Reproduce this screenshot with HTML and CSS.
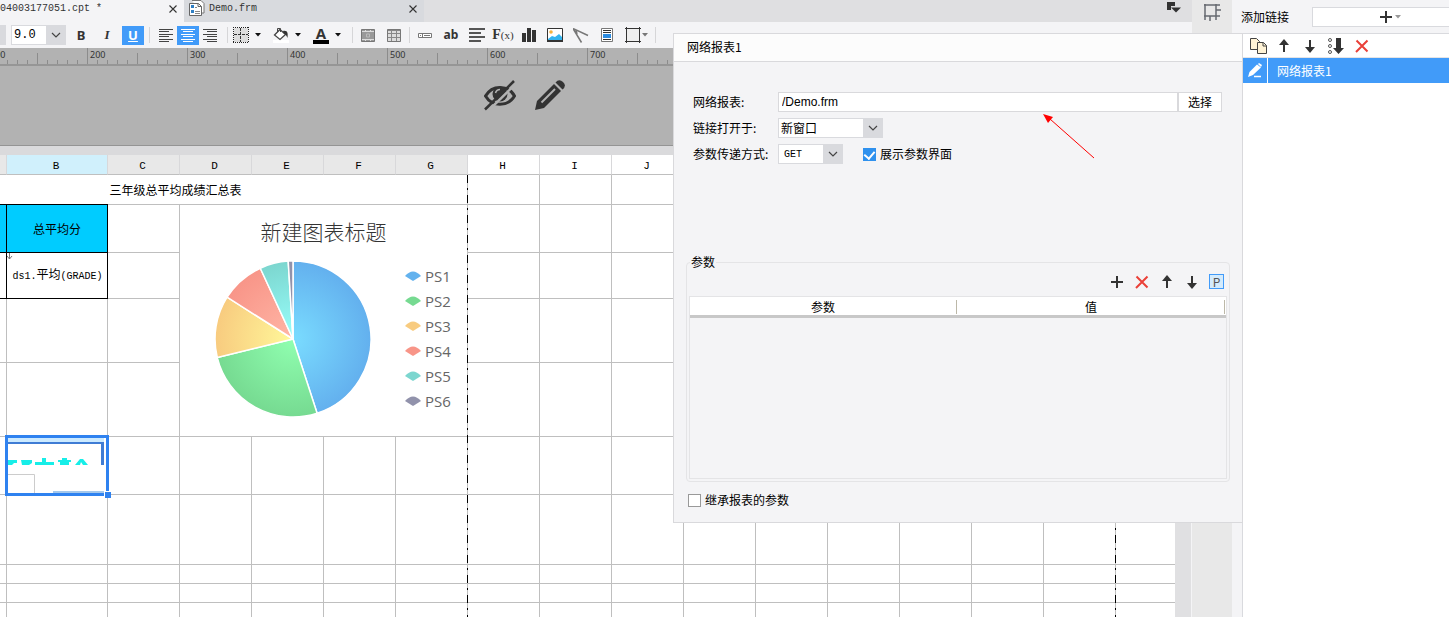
FILE: index.html
```html
<!DOCTYPE html>
<html lang="zh-CN">
<head>
<meta charset="utf-8">
<title>网络报表</title>
<link rel="stylesheet" href="styles.css">
</head>
<body>
<svg class="defs" width="0" height="0" aria-hidden="true">
  <symbol id="chev" viewBox="0 0 10 10"><path d="M1 3l4 4 4-4" fill="none" stroke="#444" stroke-width="1.2"/></symbol>
  <symbol id="caret" viewBox="0 0 6 4"><path d="M0 0h6L3 3.5z" fill="currentColor"/></symbol>
  <symbol id="close" viewBox="0 0 8 8"><path d="M.5.5l7 7M7.500.5l-7 7" fill="none" stroke="#333" stroke-width="1.1"/></symbol>
  <symbol id="plus" viewBox="0 0 14 14"><path d="M7 1v12M1 7h12" stroke="#333" stroke-width="2"/></symbol>
  <symbol id="cross" viewBox="0 0 14 14"><path d="M1.500 1.500l11 11M12.500 1.500L1 13" stroke="#ea4038" stroke-width="2"/></symbol>
  <symbol id="up" viewBox="0 0 14 14"><path d="M7 2v11" stroke="#333" stroke-width="2"/><path d="M7 0l5 6H2z" fill="#333"/></symbol>
  <symbol id="down" viewBox="0 0 14 14"><path d="M7 1v11" stroke="#333" stroke-width="2"/><path d="M7 14l5-6H2z" fill="#333"/></symbol>
</svg>
<div class="app">
  <main class="designer">
    <nav class="tabs">
      <div class="tab active"><span class="tab-name">04003177051.cpt *</span><button class="tab-close" aria-label="关闭"><svg width="8" height="8"><use href="#close"/></svg></button></div>
      <div class="tab"><svg class="tab-icon" width="16" height="17" viewBox="0 0 16 17"><path d="M3 .5h9l3 3V13h-2" fill="#fff" stroke="#777"/><path d="M.5 3.500h9l3 3V15.500H.5z" fill="#fff" stroke="#666"/><path d="M9 3.500v3h3.500" fill="none" stroke="#666"/><path d="M2 5h3v3H2zM2 10h3v3H2z" fill="#2f7fc4"/><path d="M6 7.500h2M6 11.500h5M6 13.500h5" stroke="#888"/></svg><span class="tab-name">Demo.frm</span><button class="tab-close" aria-label="关闭"><svg width="8" height="8"><use href="#close"/></svg></button></div>
      <button class="tab-list" aria-label="标签列表"><svg width="14" height="11" viewBox="0 0 14 11"><path d="M0 0h8v4H4v4H0z" fill="#333"/><path d="M4 5.500h10L9 10.500z" fill="#333"/></svg></button>
    </nav>

    <div class="toolbar">
      <span class="stub"></span>
      <label class="combo size-combo"><select class="mono" aria-label="字号"><option>9.0</option></select><span class="arrow"><svg width="10" height="10"><use href="#chev"/></svg></span></label>
      <div class="group style-group">
        <button class="tool letter bold">B</button>
        <button class="tool letter italic">I</button>
        <button class="tool letter under on">U</button>
      </div>
      <i class="sep"></i>
      <div class="group align-group">
        <button class="tool" aria-label="左对齐"><svg width="14" height="13"><path d="M0 .5h14M0 2.500h10M0 5.500h14M0 7.500h10M0 10.500h14M0 12.500h10" stroke="#444"/></svg></button>
        <button class="tool on" aria-label="居中"><svg width="14" height="13"><path d="M0 .5h14M2 2.500h10M0 5.500h14M2 7.500h10M0 10.500h14M2 12.500h10" stroke="#fff"/></svg></button>
        <button class="tool" aria-label="右对齐"><svg width="14" height="13"><path d="M0 .5h14M4 2.500h10M0 5.500h14M4 7.500h10M0 10.500h14M4 12.500h10" stroke="#444"/></svg></button>
      </div>
      <i class="sep"></i>
      <div class="group">
        <button class="split" aria-label="边框"><svg width="16" height="16"><path fill="#ddd" d="M1 1h14v14H1z"/><path d="M.5 0v16M15.500 0v16M0 .5h16M0 15.500h16" stroke="#222" stroke-dasharray="1 1"/><path d="M7.500 1v14M1 7.500h14" stroke="#333" stroke-dasharray="3 1"/></svg><svg width="6" height="4"><use href="#caret"/></svg></button>
        <button class="split" aria-label="填充"><svg width="16" height="16"><path fill="#fff" d="M0 13h16v3H0z"/><path d="M7 2.500l5.500 5L7 12.500 1.500 8z" fill="#fff" stroke="#444" stroke-width="1.300"/><path d="M4.500 5V1.500h3V5" fill="none" stroke="#444"/><path d="M10 4c5-1 5 3 4.500 7-1-2-1.500-4-4-5z" fill="#333"/></svg><svg width="6" height="4"><use href="#caret"/></svg></button>
        <button class="split" aria-label="字体颜色"><span class="font-color">A</span><svg width="6" height="4"><use href="#caret"/></svg></button>
      </div>
      <i class="sep"></i>
      <div class="group">
        <button class="tool wide" aria-label="合并"><svg width="14" height="13"><path d="M.5.5h13v12H.5z" fill="#999" stroke="#777"/><path d="M1 2.500h12M1 10.500h12" stroke="#ddd"/><path d="M4.500 1v2M9.500 1v2M4.500 10v2M9.500 10v2" stroke="#ddd"/><path d="M5.500 5h3v3h-3z" fill="none" stroke="#bbb"/></svg></button>
        <button class="tool wide" aria-label="拆分"><svg width="14" height="13"><path d="M.5.5h13v12H.5z" fill="#888" stroke="#777"/><path d="M1 2h3v2H1zM5 2h4v2H5zM10 2h3v2h-3zM1 5h3v3H1zM5 5h4v3H5zM10 5h3v3h-3zM1 9h3v3H1zM5 9h4v3H5zM10 9h3v3h-3z" fill="#ddd"/></svg></button>
      </div>
      <i class="sep"></i>
      <div class="group">
        <button class="tool wide" aria-label="控件"><svg width="14" height="5"><path d="M.5.5h13v4H.5zM4.500.5v4" fill="#fff" stroke="#777"/><path d="M6 2.500h6" stroke="#777"/><path d="M2 2.500h1" stroke="#777"/></svg></button>
        <button class="tool wide letter ab">ab</button>
        <button class="tool wide" aria-label="富文本"><svg width="16" height="14"><path d="M0 1h16M0 5h12M0 9h16M0 13h12" stroke="#555" stroke-width="2"/></svg></button>
        <button class="tool wide letter fx">F<small>(x)</small></button>
        <button class="tool wide" aria-label="图表"><svg width="14" height="14"><path d="M0 5h4v9H0zM5 0h4v14H5zM10 2h4v12h-4z" fill="#333"/></svg></button>
        <button class="tool wide" aria-label="图片"><svg width="16" height="14"><path d="M.5.500h15v13H.5z" fill="#fff" stroke="#333"/><circle cx="4" cy="4" r="1.800" fill="#f7b23b"/><path d="M1 11l4-3 3 1 4-3 3 3v3H1z" fill="#35b4ef"/><path d="M0 12h16v2H0z" fill="#333"/></svg></button>
        <button class="tool wide" aria-label="斜线"><svg width="16" height="15"><path d="M0 .5l15 7M0 .5l8.500 14M3 2l1 4" fill="none" stroke="#777" stroke-width="1.500"/></svg></button>
        <button class="tool wide" aria-label="子报表"><svg width="12" height="14"><path d="M.5.500h11v13H.5z" fill="#fff" stroke="#777"/><path d="M2 2.500h8M2 4.500h8M2 11.500h8" stroke="#333"/><path d="M2 6h8v4H2z" fill="#2b8be0"/></svg></button>
        <button class="tool wide shape" aria-label="形状"><svg width="16" height="16"><path d="M2 2h12v12H2z" fill="#eee"/><path d="M0 1.500h16M0 14.500h16M1.500 0v16M14.500 0v16" stroke="#333"/></svg><svg width="6" height="4"><use href="#caret"/></svg></button>
      </div>
      <i class="sep shape-sep"></i>
    </div>

    <div class="ruler"><div class="ruler-track"><span>100</span><span>200</span><span>300</span><span>400</span><span>500</span><span>600</span><span>700</span></div></div>

    <div class="param-pane">
      <button aria-label="隐藏"><svg width="32" height="31" viewBox="0 0 32 31"><path d="M1.500 16C8 4.500 24 4.500 30.500 16 24 27 8 27 1.500 16z" fill="none" stroke="#333" stroke-width="3"/><circle cx="16" cy="14" r="7.500" fill="#333"/><path d="M11.500 13q1-3.500 4.500-3.500" stroke="#b2b2b2" stroke-width="1.500" fill="none"/><path d="M3 32L32 3.500" stroke="#b2b2b2" stroke-width="2.500"/><path d="M1 29.500L30 1" stroke="#333" stroke-width="2.500"/></svg></button>
      <button aria-label="编辑"><svg width="30" height="30" viewBox="0 0 30 30"><path d="M0 30L2 21 19 4l7 7L9 28z" fill="#333"/><path d="M20.500 2.500Q24-1.500 28 2t-.5 7.500z" fill="#333"/><path d="M6.500 22.500L20 9" stroke="#b2b2b2" stroke-width="2"/></svg></button>
    </div>

    <div class="sheet-area">
      <div class="sheet">
        <table class="grid">
          <colgroup><col class="col-a"><col class="col-b"><col span="15" class="col-n"></colgroup>
          <thead>
            <tr><th class="page"></th><th class="current">B</th><th class="page">C</th><th class="page">D</th><th class="page">E</th><th class="page">F</th><th class="page">G</th><th>H</th><th>I</th><th>J</th><th></th><th></th><th></th><th></th><th></th><th></th><th></th></tr>
          </thead>
          <tbody>
            <tr class="h30"><td colspan="7" class="report-title">三年级总平均成绩汇总表</td><td></td><td></td><td></td><td></td><td></td><td></td><td></td><td></td><td></td><td></td></tr>
            <tr class="h48"><td class="ink head top"></td><td class="ink head top">总平均分</td><td></td>
              <td colspan="4" rowspan="4" class="chart-cell">
                <div class="chart">
                  <h2>新建图表标题</h2>
                  <svg class="pie" width="158" height="158" viewBox="-79 -79 158 158">
                    <defs>
                      <radialGradient id="g1" gradientUnits="userSpaceOnUse" cx="0" cy="0" r="78"><stop offset="0" stop-color="#7adcff"/><stop offset="1" stop-color="#63b0ee"/></radialGradient>
                      <radialGradient id="g2" gradientUnits="userSpaceOnUse" cx="0" cy="0" r="78"><stop offset="0" stop-color="#90ffb0"/><stop offset="1" stop-color="#76da91"/></radialGradient>
                      <radialGradient id="g3" gradientUnits="userSpaceOnUse" cx="0" cy="0" r="78"><stop offset="0" stop-color="#fff89a"/><stop offset="1" stop-color="#f8cb7f"/></radialGradient>
                      <radialGradient id="g4" gradientUnits="userSpaceOnUse" cx="0" cy="0" r="78"><stop offset="0" stop-color="#ffb6a6"/><stop offset="1" stop-color="#f89588"/></radialGradient>
                      <radialGradient id="g5" gradientUnits="userSpaceOnUse" cx="0" cy="0" r="78"><stop offset="0" stop-color="#98fffc"/><stop offset="1" stop-color="#7cd6cf"/></radialGradient>
                    </defs>
                    <g stroke="#fff" stroke-width="1.500" stroke-linejoin="round">
                      <path fill="url(#g1)" d="M0 0V-78A78 78 0 0 1 24.100 74.200z"/>
                      <path fill="url(#g2)" d="M0 0L24.100 74.200A78 78 0 0 1-75.700 18.600z"/>
                      <path fill="url(#g3)" d="M0 0L-75.700 18.600A78 78 0 0 1-65.900-41.800z"/>
                      <path fill="url(#g4)" d="M0 0L-65.900-41.800A78 78 0 0 1-32.700-70.800z"/>
                      <path fill="url(#g5)" d="M0 0L-32.700-70.800A78 78 0 0 1-4.800-77.900z"/>
                      <path fill="#9192ab" d="M0 0L-4.800-77.900A78 78 0 0 1 0-78z"/>
                    </g>
                  </svg>
                  <ul class="legend">
                    <li class="c1"><svg width="16" height="10"><path d="M0 5Q8-4 16 5L8 10z"/></svg>PS1</li>
                    <li class="c2"><svg width="16" height="10"><path d="M0 5Q8-4 16 5L8 10z"/></svg>PS2</li>
                    <li class="c3"><svg width="16" height="10"><path d="M0 5Q8-4 16 5L8 10z"/></svg>PS3</li>
                    <li class="c4"><svg width="16" height="10"><path d="M0 5Q8-4 16 5L8 10z"/></svg>PS4</li>
                    <li class="c5"><svg width="16" height="10"><path d="M0 5Q8-4 16 5L8 10z"/></svg>PS5</li>
                    <li class="c6"><svg width="16" height="10"><path d="M0 5Q8-4 16 5L8 10z"/></svg>PS6</li>
                  </ul>
                </div>
              </td>
              <td></td><td></td><td></td><td></td><td></td><td></td><td></td><td></td><td></td><td></td></tr>
            <tr class="h46"><td class="ink"></td><td class="ink field"><svg class="expand" width="6" height="7"><path d="M2.500 0v6M0 3l2.500 3L5 3" fill="none" stroke="#777"/></svg><span class="mono">ds1.</span>平均<span class="mono">(GRADE)</span></td><td></td><td></td><td></td><td></td><td></td><td></td><td></td><td></td><td></td><td></td><td></td></tr>
            <tr class="h64"><td></td><td></td><td></td><td></td><td></td><td></td><td></td><td></td><td></td><td></td><td></td><td></td><td></td></tr>
            <tr class="h74"><td></td><td></td><td></td><td></td><td></td><td></td><td></td><td></td><td></td><td></td><td></td><td></td><td></td></tr>
            <tr class="h58"><td></td><td class="picked"><div class="selection"><svg width="98" height="55" viewBox="0 0 98 55"><path fill="#cceaff" d="M0 0h96v4H0z"/><path fill="#3f7cd4" d="M0 4h96v23h-3V6H0z"/><path fill="#17eee8" d="M0 22h9v3H6l-2 2H0zM13 22h11v3l-3 2h-7zM27 24h7v-4h4v4h8v3H27zM50 22h4v-2h5v2h4v2h-2v3h-9v-3h-2zM67 27l5-6h3l5 6h-5l-2-3-1 3z"/><path d="M0 36.500h26.500V55" fill="none" stroke="#ccc"/><path fill="#a4c8ec" d="M45 53h53v2H45z"/></svg></div></td><td></td><td></td><td></td><td></td><td></td><td></td><td></td><td></td><td></td><td></td><td></td><td></td><td></td><td></td><td></td></tr>
            <tr class="h70"><td></td><td></td><td></td><td></td><td></td><td></td><td></td><td></td><td></td><td></td><td></td><td></td><td></td><td></td><td></td><td></td><td></td></tr>
            <tr class="h19"><td></td><td></td><td></td><td></td><td></td><td></td><td></td><td></td><td></td><td></td><td></td><td></td><td></td><td></td><td></td><td></td><td></td></tr>
            <tr class="h19"><td></td><td></td><td></td><td></td><td></td><td></td><td></td><td></td><td></td><td></td><td></td><td></td><td></td><td></td><td></td><td></td><td></td></tr>
            <tr class="h19"><td></td><td></td><td></td><td></td><td></td><td></td><td></td><td></td><td></td><td></td><td></td><td></td><td></td><td></td><td></td><td></td><td></td></tr>
          </tbody>
        </table>
        <i class="page-edge first"></i>
        <i class="page-edge second"></i>
      </div>
      <div class="scrollbar"></div>
    </div>
  </main>

  <div class="rail"><button aria-label="单元格元素"><svg width="17" height="17"><path d="M1 0v16M0 1h16M0 12h16M12 0v16M12 6h5M6 12v5" fill="none" stroke="#666a70" stroke-width="1.500"/></svg></button></div>

  <aside class="links">
    <div class="links-top"><span>添加链接</span><button class="add" aria-label="添加"><svg width="14" height="14"><use href="#plus"/></svg><svg class="dim" width="6" height="4"><use href="#caret"/></svg></button></div>
    <div class="links-body">
      <div class="links-tools">
        <button aria-label="复制"><svg width="17" height="16"><path d="M.5.500h6l3 3v8h-9z" fill="#fff3d6" stroke="#444"/><path d="M7.500 4.500h6l3 3v8h-9z" fill="#fff3d6" stroke="#444"/><path d="M13 4.500v3.500h3.500" fill="none" stroke="#444"/></svg></button>
        <button aria-label="上移"><svg width="14" height="14"><use href="#up"/></svg></button>
        <button aria-label="下移"><svg width="14" height="14"><use href="#down"/></svg></button>
        <button aria-label="排序"><svg width="16" height="16"><g fill="none" stroke="#555"><circle cx="2" cy="2" r="1.500"/><circle cx="2" cy="8" r="1.500"/><circle cx="2" cy="14" r="1.500"/></g><path d="M8 0h5v10h3l-5.500 6L5 10h3z" fill="#333"/></svg></button>
        <button aria-label="删除"><svg width="14" height="14"><use href="#cross"/></svg></button>
      </div>
      <div class="link-item"><span class="edit"><svg width="15" height="15"><path d="M0 14l1.500-5L9 1.500l4 3L5 12z" fill="#fff"/><path d="M10 1l1-1 3 2-1 2z" fill="#fff"/><path d="M6 13.500h7" stroke="#fff" stroke-width="1.500"/></svg></span><span>网络报表1</span></div>
    </div>
  </aside>

  <section class="dialog">
    <header>网络报表1</header>
    <div class="form">
      <div class="row"><label class="name" for="path">网络报表:</label><input id="path" class="path" type="text" value="/Demo.frm"><button class="choose">选择</button></div>
      <div class="row"><label class="name" for="target">链接打开于:</label><span class="combo target"><select id="target"><option>新窗口</option></select><span class="arrow"><svg width="10" height="10"><use href="#chev"/></svg></span></span></div>
      <div class="row"><label class="name" for="method">参数传递方式:</label><span class="combo method"><select id="method" class="mono"><option>GET</option></select><span class="arrow"><svg width="10" height="10"><use href="#chev"/></svg></span></span>
        <label class="check show"><input type="checkbox" checked><span>展示参数界面</span></label></div>
    </div>
    <fieldset class="params">
      <legend>参数</legend>
      <div class="param-tools">
        <button aria-label="添加"><svg width="14" height="14"><use href="#plus"/></svg></button>
        <button aria-label="删除"><svg width="14" height="14"><use href="#cross"/></svg></button>
        <button aria-label="上移"><svg width="14" height="14"><use href="#up"/></svg></button>
        <button aria-label="下移"><svg width="14" height="14"><use href="#down"/></svg></button>
        <button class="p">P</button>
      </div>
      <div class="param-box"><table><thead><tr><th><span>参数</span></th><th><span>值</span></th></tr></thead></table></div>
    </fieldset>
    <label class="check inherit"><input type="checkbox"><span>继承报表的参数</span></label>
    <svg class="pointer" width="54" height="48"><path d="M8 6l44 39" stroke="#f00"/><path d="M1 1l10 3-5 6z" fill="#f00"/></svg>
  </section>
</div>
</body>
</html>
```
FILE: styles.css
```css
* { box-sizing: border-box; }
body {
  margin: 0;
  overflow: hidden;
  font: 12px/16px "Liberation Sans", "Noto Sans CJK SC", sans-serif;
  color: #000;
  background: #f4f4f6;
}
button {
  margin: 0;
  padding: 0;
  border: 0;
  background: none;
  font: inherit;
  color: inherit;
}
svg { display: block; flex: none; }
.defs { position: absolute; }
.mono { font-family: "Liberation Mono", monospace; font-size: 10px; }

.app { position: relative; display: flex; height: 100vh; }
.designer { flex: 1; min-width: 0; display: flex; flex-direction: column; }

/* document tabs */
.tabs { display: flex; height: 22px; background: #dfdfe1; overflow: hidden; }
.tab {
  display: flex;
  align-items: center;
  width: 240px;
  height: 22px;
  padding: 0 7px 5px 0;
  background: #d8dade;
}
.tab.active { width: 184px; background: #f4f4f6; }
.tab-icon { margin: 0 4px 0 5px; }
.tab-name { flex: 1; font: 10px/14px "Liberation Mono", monospace; color: #333; }
.tab-list { margin: 0 11px 8px auto; }

/* toolbar */
.toolbar { display: flex; align-items: center; height: 26px; flex: none; overflow: hidden; }
.stub { width: 6px; height: 20px; margin-right: 5px; background: #d9dade; }
.combo { display: flex; height: 20px; border: 1px solid #d9dade; background: #fff; }
.combo select {
  flex: 1;
  min-width: 0;
  padding: 0 2px;
  border: 0;
  appearance: none;
  background: #fff;
  font: 12px/16px "Noto Sans CJK SC", sans-serif;
  color: #000;
}
.combo select.mono { font: 10px/16px "Liberation Mono", monospace; padding: 1px 0 0 5px; }
.combo .arrow { display: grid; place-items: center; width: 19px; background: #d9dade; }
.size-combo { width: 55px; margin-right: 4px; }
.toolbar .combo select.mono { font-size: 12px; padding: 0 0 0 2px; }
.group { display: flex; align-items: center; }
.style-group { gap: 4px; padding-right: 3px; }
.align-group { padding: 0 4px 0 3px; }
.sep { width: 1px; height: 16px; margin: 0 2px; background: #d6d6d8; }
.tool { display: flex; align-items: center; justify-content: center; width: 22px; height: 19px; color: #333; }
.tool.wide { width: 26px; }
.tool.on { background: #419bf9; color: #fff; }
.letter { font-family: "Noto Sans", sans-serif; font-size: 13px; font-weight: 700; }
.italic { font-family: "Liberation Serif", serif; font-style: italic; }
.under { text-decoration: underline; }
.ab { font-size: 12px; }
.fx { font-family: "Liberation Serif", serif; font-size: 14px; }
.fx small { font-size: 11px; font-weight: 400; }
.split { display: flex; align-items: center; gap: 6px; width: 40px; padding-left: 3px; color: #111; }
.font-color {
  width: 16px;
  border-bottom: 4px solid #000;
  font: 700 15px/13px "Noto Sans", sans-serif;
  color: #333;
}
.shape { gap: 1px; color: #777; }
.tool.shape { width: 32px; }
.shape-sep { margin-left: 3px; }

/* ruler */
.ruler { flex: none; height: 18px; background: #b2b2b2; border-bottom: 2px solid #969696; overflow: hidden; }
.ruler-track { display: flex; margin-left: -13px; }
.ruler-track span {
  flex: 0 0 100px;
  height: 16px;
  padding-left: 3px;
  font: 9px/13px "Noto Sans", sans-serif;
  color: #333;
  background:
    linear-gradient(#8c8c8c, #8c8c8c) 0 0 / 1px 16px no-repeat,
    linear-gradient(#8c8c8c, #8c8c8c) 50px 5px / 1px 11px no-repeat,
    repeating-linear-gradient(90deg, #8c8c8c 0 1px, transparent 1px 10px) 0 12px / 100px 4px no-repeat;
}

.param-pane {
  display: flex;
  flex: none;
  align-items: flex-start;
  gap: 19px;
  height: 80px;
  padding: 14px 0 0 484px;
  background: #b2b2b2;
  border-bottom: 1px solid #949494;
}

/* sheet */
.sheet-area { flex: 1; min-height: 0; display: flex; border-top: 9px solid #dadadc; background: #fff; }
.sheet { position: relative; flex: 1; min-width: 0; overflow: hidden; }
.scrollbar { width: 17px; background: #e0e0e2; border-right: 1px solid #f4f4f6; }
.grid { width: 1188px; table-layout: fixed; border-collapse: separate; border-spacing: 0; }
.col-a { width: 7px; }
.col-b { width: 101px; }
.col-n { width: 72px; }
.grid th {
  height: 20px;
  padding: 2px 2px 0 0;
  border-right: 1px solid #d8d8da;
  border-bottom: 1px solid #bfbfbf;
  font: 11px/16px "Liberation Mono", monospace;
}
.grid th.page { background: #e8e8e8; }
.grid th.current { background: #d0f0fc; }
.grid td {
  padding: 0;
  border-right: 1px solid #bfbfbf;
  border-bottom: 1px solid #bfbfbf;
  text-align: center;
  font-family: "Noto Sans CJK SC", sans-serif;
}
.grid td.report-title { padding-right: 116px; }
.grid td.ink { border-color: #000; }
.grid td.head { background: #00ccff; }
.grid td.top { box-shadow: 0 -1px #000; }
.grid td.field { position: relative; padding-left: 1px; white-space: nowrap; }
.expand { position: absolute; left: 0; top: 0; }
.h30 { height: 30px; }
.h48 { height: 48px; }
.h46 { height: 46px; }
.h64 { height: 64px; }
.h74 { height: 74px; }
.h58 { height: 58px; }
.h70 { height: 70px; }
.h19 { height: 19px; }
.picked { position: relative; }
.selection { position: absolute; inset: -2px; border: 3px solid #2f82f0; background: #fff; }
.selection::after {
  content: "";
  position: absolute;
  right: -5px;
  bottom: -5px;
  width: 6px;
  height: 6px;
  background: #2f82f0;
  border-left: 1px solid #fff;
  border-top: 1px solid #fff;
}
.page-edge {
  position: absolute;
  top: 20px;
  bottom: 0;
  width: 1px;
  background: repeating-linear-gradient(#000 0 8px, #bfbfbf 8px 13px, #000 13px 15px, #bfbfbf 15px 20px);
}
.page-edge.first { left: 467px; }
.page-edge.second { left: 1115px; }

/* chart */
.chart {
  display: grid;
  grid-template: 54px 158px 18px / 158px 1fr;
  column-gap: 33px;
  padding-left: 34px;
  text-align: left;
}
.chart h2 {
  grid-column: 1 / 3;
  margin: 10px 34px 0 0;
  font: 300 21px/30px "Noto Sans CJK SC", sans-serif;
  color: #333;
  text-align: center;
}
.legend {
  margin: 4px 0 0;
  padding: 0;
  list-style: none;
  font: 15px/25px "Open Sans", sans-serif;
  color: #666;
}
.legend li { display: flex; align-items: center; gap: 4px; }
.c1 svg { fill: #63b2ee; }
.c2 svg { fill: #76da91; }
.c3 svg { fill: #f8cb7f; }
.c4 svg { fill: #f89588; }
.c5 svg { fill: #7cd6cf; }
.c6 svg { fill: #9192ab; }

/* side rail and link list */
.rail { width: 40px; padding: 4px 0 0 12px; background: #e8e8e8; }
.links { width: 217px; display: flex; flex-direction: column; }
.links-top { display: flex; align-items: center; height: 33px; padding-left: 9px; font-family: "Noto Sans CJK SC", sans-serif; }
.add {
  display: flex;
  flex: 1;
  align-items: center;
  justify-content: center;
  gap: 2px;
  height: 20px;
  margin: 0 -18px 0 23px;
  background: #fff;
  border: 1px solid #d9dade;
}
.dim { color: #999; }
.links-body { flex: 1; margin-left: 10px; border: 1px solid #d9dade; border-width: 1px 0 0 1px; background: #fff; }
.links-tools { display: flex; height: 24px; padding-left: 2px; border-bottom: 1px solid #e4e4e6; }
.links-tools button { display: grid; place-items: center; width: 26px; }
.link-item { display: flex; height: 25px; line-height: 25px; background: #419bf9; color: #fff; font-family: "Noto Sans CJK SC", sans-serif; }
.edit { display: grid; place-items: center; width: 25px; margin-right: 9px; border-right: 1px solid #fff; }

/* dialog */
.dialog {
  position: absolute;
  top: 33px;
  right: 206px;
  width: 570px;
  padding-bottom: 14px;
  border: 1px solid #d9d9dc;
  background: #f4f4f6;
  font-family: "Noto Sans CJK SC", sans-serif;
}
.dialog header { height: 28px; padding-left: 13px; line-height: 26px; background: #fcfcfc; border-bottom: 1px solid #d9d9dc; }
.form { display: flex; flex-direction: column; gap: 6px; padding: 30px 20px 0 19px; }
.row { display: flex; align-items: center; height: 20px; }
.name { width: 85px; }
.path {
  flex: 1;
  min-width: 0;
  height: 20px;
  padding: 0 3px;
  border: 1px solid #d9d9dc;
  background: #fff;
  font: 12px/16px "Liberation Sans", sans-serif;
}
.choose { width: 44px; height: 20px; background: #fff; border: 1px solid #d9d9dc; }
.target { width: 105px; }
.method { width: 65px; }
.check { display: flex; align-items: center; gap: 4px; }
.check input {
  appearance: none;
  width: 13px;
  height: 13px;
  margin: 0;
  border: 1px solid #999;
  background: #fff;
}
.check input:checked { border-color: #2f91ee; background: #2f91ee; }
.check input:checked::before {
  content: "";
  display: block;
  width: 5px;
  height: 8px;
  margin: 0 auto;
  border: solid #fff;
  border-width: 0 2px 2px 0;
  rotate: 40deg;
}
.show { margin-left: 20px; }
.params { margin: 90px 12px 0 12px; padding: 0 2px 2px 2px; border: 1px solid #e4e4e6; border-radius: 4px; }
.params legend { margin-left: 1px; padding: 0 1px; }
.param-tools { display: flex; justify-content: flex-end; align-items: flex-start; height: 26px; padding: 4px 1px 0 0; }
.param-tools button { display: grid; place-items: center; width: 25px; height: 15px; }
.param-tools .p {
  width: 15px;
  height: 15px;
  margin: 0 2px 0 5px;
  border: 1px solid #419bf9;
  background: #d4ebfc;
  color: #555;
  line-height: 13px;
}
.param-box { height: 183px; border: 1px solid #e4e4e6; }
.param-box table { width: 100%; border-collapse: separate; border-spacing: 0; table-layout: fixed; }
.param-box th { height: 21px; padding: 3px 1px 1px 0; background: #fff; border-bottom: 3px solid #c8c8c8; font-weight: 400; }
.param-box th span { display: block; height: 14px; line-height: 14px; border-right: 1px solid #bcb8a8; }
.inherit { margin: 10px 0 0 14px; }
.pointer { position: absolute; left: 368px; top: 79px; }
```
